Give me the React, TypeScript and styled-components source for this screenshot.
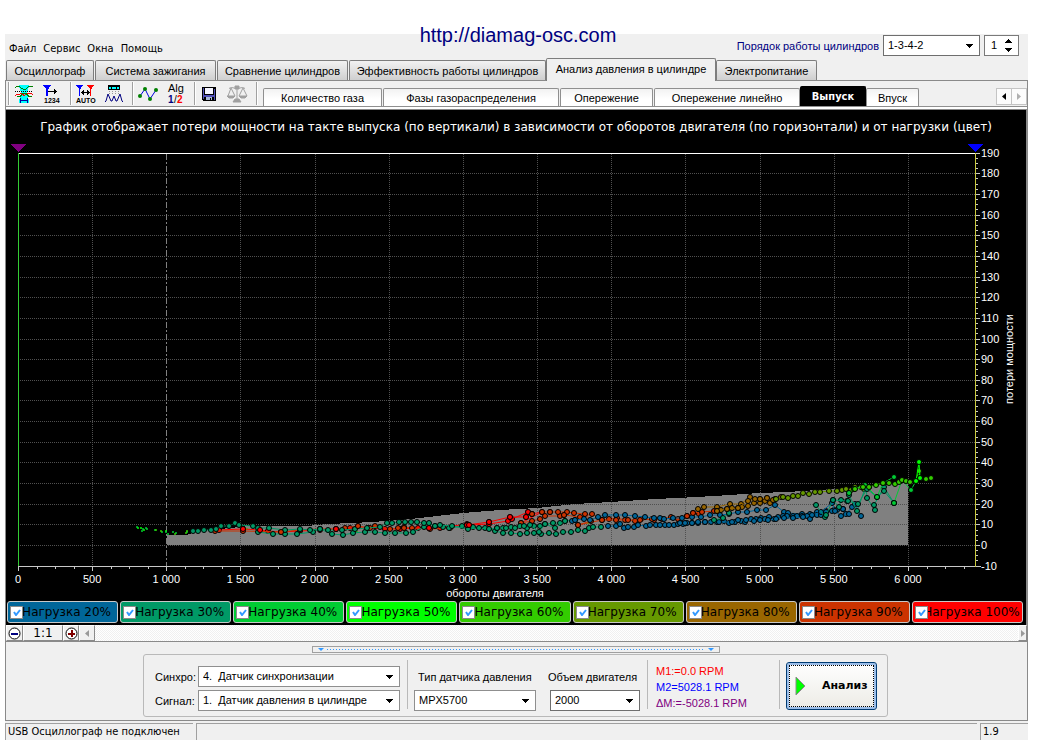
import React from "react";
import styled, { createGlobalStyle, css } from "styled-components";

const GlobalStyle = createGlobalStyle`
  * { box-sizing: border-box; }
  body {
    margin: 0;
    background: #fff;
    color: #000;
    font: 11px/14px "Liberation Sans", Arial, sans-serif;
  }
  button, input, select { font: inherit; color: inherit; margin: 0; }
`;

const tahoma = `"DejaVu Sans Condensed", Tahoma, sans-serif`;
const verdana = `"DejaVu Sans", Verdana, sans-serif`;

/* ---------- window ---------- */

const Page = styled.div`
  position: relative;
  padding: 34px 12px 0 5px;
`;

const SiteLink = styled.a`
  position: absolute;
  top: 23px;
  left: 0;
  right: 4px;
  text-align: center;
  font-size: 20px;
  line-height: 24px;
  color: #000080;
  text-decoration: none;
  pointer-events: none;
`;

const Window = styled.main`
  background: #f0f0f0;
`;

const MenuRow = styled.header`
  display: flex;
  justify-content: space-between;
  height: 24px;
`;

const Menu = styled.nav`
  display: flex;
  gap: 7px;
  padding: 5px 0 0 4px;
`;

const MenuItem = styled.button`
  border: 0;
  padding: 0;
  background: none;
  font-family: ${tahoma};
  line-height: 14px;
`;

const OrderBar = styled.div`
  display: flex;
  align-items: center;
  gap: 4px;
  height: 22px;
  padding-right: 9px;
`;

const OrderLabel = styled.label`
  color: #000080;
  padding-top: 2px;
`;

/* ---------- form parts ---------- */

const SelectBox = styled.span<{ $width: number; $dark?: boolean }>`
  position: relative;
  display: inline-flex;
  width: ${(p) => p.$width}px;
  height: 21px;

  select {
    appearance: none;
    width: 100%;
    border: 1px solid ${(p) => (p.$dark ? "#6e6e6e" : "#8f8f8f")};
    border-radius: 0;
    background: #fff;
    padding: 0 20px 0 4px;
    line-height: 17px;
    outline: none;
  }

  svg {
    position: absolute;
    right: 7px;
    top: 9px;
    pointer-events: none;
  }
`;

const SpinBox = styled.span`
  position: relative;
  display: inline-flex;
  width: 35px;
  height: 21px;

  input {
    appearance: textfield;
    width: 100%;
    border: 1px solid #7a7a7a;
    border-radius: 0;
    background: #fff;
    padding: 0 16px 0 6px;
    outline: none;
  }
  input::-webkit-inner-spin-button { display: none; }

  svg {
    position: absolute;
    right: 7px;
    top: 4px;
    pointer-events: none;
  }
`;

function Select({ id, width, options, dark, label }: {
  id: string; width: number; options: string[]; dark?: boolean; label?: string;
}) {
  return (
    <SelectBox $width={width} $dark={dark}>
      <select id={id} aria-label={label}>
        {options.map((o) => <option key={o}>{o}</option>)}
      </select>
      <svg width="7" height="4" viewBox="0 0 7 4" shapeRendering="crispEdges">
        <path d="M0 0h7v1H0zM1 1h5v1H1zM2 2h3v1H2zM3 3h1v1H3z" />
      </svg>
    </SelectBox>
  );
}

/* ---------- tab strips ---------- */

const MainTabs = styled.div`
  display: flex;
  align-items: flex-end;
  gap: 1px;
  height: 22px;
  padding-left: 1px;
`;

const MainTab = styled.button<{ $width: number; $active?: boolean }>`
  flex: 0 1 ${(p) => p.$width}px;
  height: 20px;
  padding: 0;
  border: 1px solid #7d7d7d;
  border-bottom: 0;
  border-radius: 2px 2px 0 0;
  background: linear-gradient(#f2f2f2, #cfcfcf);
  font-size: 11px;
  white-space: nowrap;
  ${(p) => p.$active && css`
    height: 23px;
    margin: 0 -1px -1px;
    background: #f0f0f0;
    position: relative;
    padding-bottom: 2px;
  `}
`;

const Toolbar = styled.div`
  display: flex;
  align-items: flex-end;
  height: 29px;
  border: 1px solid #8a8a8a;
  border-width: 1px 1px 0;
  background: linear-gradient(#f0f0f0 25px, #8f8f8f 25px, #8f8f8f 26px, #fff 26px);
`;

const Tools = styled.div`
  display: flex;
  align-items: center;
  align-self: flex-start;
  gap: 4px;
  height: 25px;
  width: 257px;
  flex: none;
  padding-left: 2px;
`;

const ToolGroup = styled.div`
  display: flex;
  align-items: center;
`;

const ToolSeparator = styled.span`
  width: 2px;
  height: 23px;
  border-left: 1px solid #a0a0a0;
  border-right: 1px solid #fff;
`;

const ToolButton = styled.button`
  display: grid;
  place-items: center;
  width: 28px;
  height: 24px;
  padding: 0;
  border: 0;
  background: none;
`;

const InnerTabs = styled.div`
  display: flex;
  flex: 1;
  gap: 1px;
  align-items: flex-end;
  align-self: flex-start;
  height: 25px;
`;

const InnerTab = styled.button<{ $width: number; $active?: boolean }>`
  flex: 0 1 ${(p) => p.$width}px;
  height: 18px;
  padding: 1px 0 0;
  border: 1px solid #8f8f8f;
  border-bottom: 0;
  border-radius: 2px 2px 0 0;
  background: linear-gradient(#f2f2f2, #fff 60%);
  white-space: nowrap;
  ${(p) => p.$active && css`
    height: 20px;
    margin: 0 -1px;
    background: #000;
    border-color: #000;
    color: #fff;
    font-family: ${tahoma};
    font-weight: bold;
  `}
`;

const TabScroller = styled.div`
  display: flex;
  align-self: flex-start;
  margin-top: 7px;
`;

const TabArrow = styled.button`
  display: grid;
  place-items: center;
  width: 16px;
  height: 17px;
  padding: 0;
  margin-left: -1px;
  border: 1px solid #c4c4c4;
  background: #fcfcfc;
`;

/* ---------- chart ---------- */

const ChartPanel = styled.section`
  border: 1px solid #8a8a8a;
  border-width: 1px 2px 0 1px;
  background: #000;
`;

const ChartTitle = styled.h1`
  margin: 0;
  height: 33px;
  padding-top: 8px;
  text-align: center;
  color: #fff;
  font: 12px/18px ${verdana};
  white-space: nowrap;
`;

const Plot = styled.svg`
  display: block;
  width: 100%;
  height: auto;
  font: 11px "Liberation Sans", Arial, sans-serif;
`;

const Legend = styled.div`
  display: grid;
  grid-template-columns: repeat(9, 1fr);
  gap: 2px;
  padding: 1px 3px 2px 1px;
`;

const LegendItem = styled.label<{ $color: string }>`
  position: relative;
  display: flex;
  align-items: center;
  justify-content: center;
  height: 22px;
  padding-left: 8px;
  border: 1px solid #c8c8c8;
  border-radius: 3px;
  background: ${(p) => p.$color};
  font: 12px/18px ${verdana};
  white-space: nowrap;
`;

const LegendCheck = styled.span`
  position: absolute;
  left: 2px;
  top: 4px;
  width: 13px;
  height: 13px;

  input {
    appearance: none;
    display: block;
    width: 13px;
    height: 13px;
    border: 1px solid #8a8a8a;
    background: #fff;
  }
  svg {
    position: absolute;
    top: 3px;
    left: 3px;
    pointer-events: none;
  }
  input:not(:checked) + svg { display: none; }
`;

const ScrollRow = styled.div`
  display: flex;
  height: 17px;
  border-left: 1px solid #8a8a8a;
  border-right: 1px solid #8a8a8a;
  border-bottom: 1px solid #8a8a8a;
  background: #f0f0f0;
`;

const ScrollButton = styled.button<{ $width: number }>`
  display: grid;
  place-items: center;
  flex: none;
  width: ${(p) => p.$width}px;
  height: 16px;
  padding: 0;
  border: 1px solid;
  border-color: #fff #8a8a8a #8a8a8a #fff;
  background: #f0f0f0;
  font: 12px/15px ${verdana};
`;

const ScrollTrack = styled.div`
  flex: 1;
  background: repeating-conic-gradient(#fff 0 25%, #f0f0f0 0 50%) 0 0 / 2px 2px;
`;

/* ---------- bottom panel ---------- */

const BottomArea = styled.section`
  display: flex;
  flex-direction: column;
  align-items: center;
  gap: 1px;
  padding: 4px 2px 3px 0;
  border: 1px solid #8a8a8a;
  border-top: 0;
`;

const Splitter = styled.button`
  display: flex;
  align-items: center;
  gap: 3px;
  width: 408px;
  height: 7px;
  padding: 0 5px;
  border: 1px solid #a0a0a0;
  background: #f0f0f0;
`;

const SplitterDots = styled.span`
  flex: 1;
  height: 1px;
  background: repeating-linear-gradient(90deg, #3399ff 0 1px, transparent 1px 3px);
`;

const ControlGroup = styled.div`
  display: flex;
  width: 745px;
  height: 63px;
  border: 1px solid #b9b9b9;
  border-radius: 3px;
  padding: 5px 8px 4px 11px;
`;

const SignalGrid = styled.div`
  display: grid;
  grid-template-columns: 40px 202px;
  grid-auto-rows: 21px;
  row-gap: 3px;
  column-gap: 3px;
  align-items: center;
  padding-top: 6px;
`;

const Divider = styled.span`
  width: 1px;
  height: 49px;
  margin: 0 6px 0 7px;
  background: #b9b9b9;
`;

const Field = styled.div`
  display: flex;
  flex-direction: column;
  gap: 6px;
  padding-top: 10px;
  margin-right: 14px;
  label { padding-left: 4px; white-space: nowrap; }
`;

const VolumeField = styled(Field)`
  margin-right: 0;
  label { padding-left: 0; margin-left: -2px; }
`;

const Markers = styled.div`
  width: 118px;
  padding: 3px 0 0 2px;
  line-height: 16px;
  white-space: nowrap;
`;

const Marker = styled.div<{ $color: string }>`
  color: ${(p) => p.$color};
`;

const AnalyzeButton = styled.button`
  display: flex;
  align-items: center;
  gap: 15px;
  width: 91px;
  height: 48px;
  margin-top: 2px;
  padding: 0 8px;
  border: 1px solid #003c74;
  border-radius: 3px;
  background: linear-gradient(#fff, #ecebe5);
  box-shadow: inset 0 0 0 2px #9dbfea;
  outline: 1px dotted #000;
  outline-offset: -4px;
  font: bold 11px/14px ${verdana};
`;

const StatusBar = styled.footer`
  display: flex;
  gap: 3px;
  padding-top: 2px;
`;

const StatusCell = styled.div<{ $width?: number }>`
  flex: ${(p) => (p.$width ? `0 0 ${p.$width}px` : "1")};
  height: 17px;
  padding: 0 2px;
  border: 1px solid #a0a0a0;
  border-width: 1px 0 0 1px;
  font-family: ${tahoma};
  line-height: 15px;
`;

/* ---------- toolbar icons ---------- */

const IconWindow = () => (
  <svg width="20" height="20" viewBox="0 0 20 20" fill="none" shapeRendering="crispEdges">
    <path fill="#00ffff" d="M5 1h10v3h-1v3h-1v4h1v4h1v4H5v-4h1v-4h1V7H6V4H5z" />
    <path stroke="#008000" d="M1 4l2-2h2l2 2 2 1h3l2-2 2-1h2l1 1" />
    <path stroke="#000" strokeDasharray="1 1" d="M1 7.500h18" />
    <path stroke="#ff0000" d="M1 12l2-2h3l2-1 2 3 2-2 2-1h3l2 2" />
    <path stroke="#008000" d="M3 12l3 1 3-4h3l3 4 3-1" />
    <path stroke="#0000a0" d="M6 16.500h8M6.500 14v5M13.500 14v5" />
  </svg>
);

const IconCount = () => (
  <svg width="20" height="20" viewBox="0 0 20 20" shapeRendering="crispEdges">
    <path fill="#0000ff" d="M1 1h8L7 4 6 5v7H4V5L3 4z" />
    <path fill="#000" d="M6 7h9v1H6zM12 5h1v1h1v1h1v1h-1v1h-1v1h-1z" />
    <text x="2" y="19" fontSize="7" fontWeight="bold" fontFamily="Liberation Sans, sans-serif">1234</text>
  </svg>
);

const IconAuto = () => (
  <svg width="22" height="20" viewBox="0 0 22 20" shapeRendering="crispEdges">
    <path fill="#0000ff" d="M1 1h7L6 4 5 5v7H4V5L3 4z" />
    <path fill="#ff0000" d="M12 1h7l-2 3-1 1v7h-1V5l-1-1z" />
    <path fill="#000" d="M6 8h9v1H6zM8 6h1v5H8zM7 7h1v3H7zM12 6h1v5h-1zM13 7h1v3h-1z" />
    <text x="1" y="19" fontSize="7" fontWeight="bold" fontFamily="Liberation Sans, sans-serif">AUTO</text>
  </svg>
);

const IconSpread = () => (
  <svg width="20" height="20" viewBox="0 0 20 20" fill="none">
    <g shapeRendering="crispEdges">
      <path fill="#000" d="M4 1h12v5H4z" />
      <path fill="#00ffff" d="M5 3h2v2H5zM8 3h4v2H8zM13 3h2v2h-2z" />
      <path stroke="#999" strokeDasharray="1 1" d="M5.500 7v3M8.500 7v3M11.500 7v3M14.500 7v3" />
    </g>
    <path stroke="#000080" d="M1 18l1-1 2-7 3 7h1l2-5 2 5h1l3-7 2 7 1 1" />
  </svg>
);

const IconGraph = () => (
  <svg width="22" height="18" viewBox="0 0 22 18">
    <path d="M3 11 8 4l5 10 6-9" fill="none" stroke="#0000e0" />
    <g fill="#008000">
      <circle cx="3" cy="11" r="2" /><circle cx="8" cy="4" r="2" />
      <circle cx="13" cy="14" r="2" /><circle cx="19" cy="5" r="2" />
    </g>
  </svg>
);

const IconAlg = () => (
  <svg width="20" height="22" viewBox="0 0 20 22" fontFamily="Liberation Sans, sans-serif" fontSize="11">
    <text x="2" y="9">Alg</text>
    <text x="2" y="20" fontSize="10" fontWeight="bold" fill="#000080">1</text>
    <text x="8" y="20" fontSize="10">/</text>
    <text x="11" y="20" fontSize="10" fontWeight="bold" fill="#ff0000">2</text>
  </svg>
);

const IconSave = () => (
  <svg width="16" height="16" viewBox="0 0 16 16" shapeRendering="crispEdges">
    <path d="M0 1h14v14H1l-1-1z" />
    <path fill="#5050b8" d="M1 2h1v11H1zM12 3h1v11h-1zM2 9h10v2H2z" />
    <path fill="#f4f4ff" d="M3 2h8v6H3z" />
    <path fill="#a8b8d8" d="M4 11h6v3H4z" />
    <path d="M8 12h1v2H8z" />
  </svg>
);

const IconScales = () => (
  <svg width="22" height="20" viewBox="0 0 22 20" fill="none" stroke="#a0a0a0">
    <path d="M10 2v14M2 4.500c3-2 5 0 8 0s5-2 8 0M4 4 1 12M4 4l4 8M16 4l-4 8M16 4l4 8" />
    <path fill="#a0a0a0" d="M0 12h8l-2 2H2zM12 12h8l-2 2h-4zM8 2h4v3H8zM8 15h4l2 3H6z" />
  </svg>
);

/* ---------- chart data ---------- */

const COLORS: Record<string, string> = {
  "20": "#006699", "30": "#009966", "40": "#00cc33", "50": "#00ff00", "60": "#33cc00",
  "70": "#669900", "80": "#996600", "90": "#cc3300", "100": "#ff0000",
};

type Series = { load: string; line?: boolean; small?: boolean; points: string };

const SERIES: Series[] = [
  { load: "50", small: true, points: "138,528 141,528 144,530 166,531 240,527 245,530" },
  { load: "40", small: true, points: "137,527 143,529 147,529 146,528 155,530 162,532 166,532 173,532 176,533 187,532 192,531 142,531 168,534" },
  { load: "60", small: true, points: "156,530 161,531 175,534 186,533 187,531 247,529 588,523 357,532" },
  { load: "100", line: true, points: "219,530 243,529 260,530 268,531 281,532 300,531 320,530 336,529 350,528 368,528 385,529 400,529 418,528 429,528 440,528 467,524 469,525 489,524 508,521 512,519 528,512 532,514" },
  { load: "100", line: true, points: "467,525 489,522 510,517 526,517 532,514 542,512 521,523" },
  { load: "90", line: true, points: "215,531 243,531 281,532 300,530 320,529 336,529 345,528 358,526 370,528 375,526 390,529 398,528 404,527 412,528 430,529 450,528" },
  { load: "90", line: true, points: "521,523 532,521 540,519 545,516 560,516 564,515 580,517 592,514 602,520 609,519 617,518 625,520 635,521 641,519 654,520 662,519 671,517 678,519 687,516 693,513 699,514" },
  { load: "90", line: true, points: "542,512 550,512 558,512 567,512 574,513 585,514 591,521 578,525 602,520 616,520 628,520 640,520 652,519" },
  { load: "30", line: true, points: "193,531 198,531 204,530 211,530 216,529 221,526 229,526 235,523 239,525 253,526 258,532 273,534 285,534 297,534 313,532 320,529 332,534 343,535 353,533 365,532 375,532 385,533 395,533 406,533 413,532 424,527 435,526 443,527 449,528 462,526 473,527 485,528 495,531 503,533 511,533 520,534 527,533 534,533 541,534 549,533 556,534 563,532 571,532 578,530 585,531 589,528 593,527 601,527" },
  { load: "30", line: true, points: "258,528 269,528 285,530 300,529 310,530 320,529 328,530 342,530 355,529 367,528 380,527 387,523 392,523 399,522 405,522 411,522 417,522 424,523 429,523 435,526 440,525 452,526 468,529 479,528 489,529 497,528 503,528 511,527 520,526 527,528 534,526 540,526 545,524 553,523 560,523 565,521 575,520" },
  { load: "30", line: true, points: "497,528 506,528 515,528 524,526 530,525 539,532 545,524 555,528 565,521" },
  { load: "20", line: true, points: "572,521 575,520 584,519 590,520 598,517 605,515 616,515 625,515 635,516 645,517 654,518 660,518 664,519 673,518 682,518 692,517 701,517 710,515 720,515 729,514 738,512 747,512 757,510 766,510 775,505 784,512 788,513 802,514 810,514 817,512 826,511 834,510 843,509" },
  { load: "20", line: true, points: "608,526 616,526 620,524 624,528 628,527 634,527 638,525 646,526 650,525 656,525 660,525 665,525 669,525 674,525 678,524 683,524 687,523 692,523 698,523 705,522 711,522 717,522 724,521 729,523 735,522 741,521 745,522 751,519 756,519 761,518 765,519 769,517 774,519 778,517 783,516 787,516 793,516 797,516 802,516 807,516 810,519 817,515 821,515 826,512 832,511 837,510 843,509 846,514 852,507 855,504 861,516" },
  { load: "20", line: true, points: "680,523 685,523 692,523 698,522 705,522 719,522 732,522 738,520 746,520 754,521 760,520 768,520 776,519 784,518 793,518 803,517 812,515 821,512 832,503 835,511 841,516 849,514" },
  { load: "30", line: true, points: "714,520 723,518 729,513" },
  { load: "90", line: true, points: "687,516 693,513 702,512 714,511 719,509" },
  { load: "80", line: true, points: "698,509 704,507 717,507 730,504 741,504 750,497 760,499 767,498 775,499" },
  { load: "80", line: true, points: "717,511 721,510 727,509 732,508 738,508 742,507 748,506 754,503 760,503 765,501 770,503 773,500 781,497" },
  { load: "80", line: true, points: "717,511 727,509 738,508 748,501 755,499 760,499 767,498" },
  { load: "70", line: true, points: "776,499 783,497 788,498 793,496 798,496 803,493 809,494 815,492 820,492 829,491 837,491 842,490 846,489 851,490 855,487 861,487 864,489 869,487" },
  { load: "30", line: true, points: "816,505 825,517 826,515 833,500 839,507 841,500 847,501 849,495 857,511 866,486 867,498 875,510 874,505 884,487 894,503" },
  { load: "30", line: true, points: "833,500 848,501 858,504 867,489 877,497 884,491 894,503" },
  { load: "40", line: true, points: "849,493 854,489 865,485 877,497 883,483 894,477" },
  { load: "40", line: true, points: "894,503 902,480 911,490 916,481" },
  { load: "60", line: true, points: "855,489 863,487 869,487 876,485 883,483 889,483 895,484 899,482 902,480 906,481 910,482 916,481 919,471 920,478" },
  { load: "60", line: false, points: "926,479 931,478" },
  { load: "50", line: true, points: "916,481 919,462 920,478" },
];

const ACCENTS = "243,529,100 260,530,100 281,532,90 336,529,100 358,526,90 429,528,100 404,528,90 467,525,100 469,525,100 489,522,100 528,512,100 510,517,100 526,517,100 532,514,90 550,512,90 564,515,90 578,525,90"
  .split(" ").map((a) => a.split(","));

const BAND =
  "167,535 187,535 198,531 220,529 250,526 307,526 327,524 353,523 387,521 420,518 463,513 500,510 537,508 575,504 611,502 655,499 697,497 730,495 759,493 787,492 834,489 870,486 908,483 908,545 167,545";

const X0 = 18;
const xAt = (rpm: number) => Math.round(X0 + rpm * 0.14833) + 0.5;
const yAt = (loss: number) => Math.round(545 - loss * 2.065) + 0.5;
const range = (from: number, to: number, step: number) =>
  Array.from({ length: Math.floor((to - from) / step) + 1 }, (_, i) => from + i * step);
const spaced = (n: number) => String(n).replace(/\B(?=(\d{3})+$)/g, " ");

function PowerLossPlot() {
  return (
    <Plot viewBox="6 143 1020 457" role="img" aria-label="График потерь мощности">
      <g shapeRendering="crispEdges">
        <polygon points={BAND} fill="#808080" />
        <g stroke="#505050" strokeDasharray="1 1">
          {range(0, 180, 10).map((v) => <line key={v} x1={X0} x2="976" y1={yAt(v)} y2={yAt(v)} />)}
          {range(500, 6000, 500).filter((r) => r !== 1000).map((r) => (
            <line key={r} x1={xAt(r)} x2={xAt(r)} y1="154" y2="566" />
          ))}
        </g>
        <line x1={xAt(1000)} x2={xAt(1000)} y1="154" y2="566" stroke="#808080" strokeDasharray="6 2 2 2" />
        <line x1="18" x2="976" y1="153.5" y2="153.5" stroke="#fff" />
        <line x1="18" x2="981" y1="566.5" y2="566.5" stroke="#c8c8c8" />
        <line x1="18.5" x2="18.5" y1="153" y2="566" stroke="#33cc33" />
        <line x1="975.5" x2="975.5" y1="153" y2="567" stroke="#c8c83c" />
        <g stroke="#c8c8c8">
          {range(0, 6375, 125).map((r) => (
            <line key={r} x1={xAt(r)} x2={xAt(r)} y1="567" y2={r % 500 ? 569 : 571} />
          ))}
          {range(-10, 190, 2.5).map((v) => (
            <line key={v} x1="976" x2={v % 10 ? 978 : 980} y1={yAt(v)} y2={yAt(v)} />
          ))}
        </g>
        <path d="M10 144h16l-8 8z" fill="#800080" />
        <path d="M967 144h16l-8 8z" fill="#0000ff" />
      </g>

      {SERIES.map((s, i) => {
        const pts = s.points.split(" ").map((p) => p.split(","));
        return (
          <g key={i} fill={COLORS[s.load]}>
            {s.line && <polyline points={s.points} fill="none" stroke={COLORS[s.load]} />}
            {pts.map(([x, y], j) => (
              <circle key={j} cx={x} cy={y} r={s.small ? 1 : 2.5}
                stroke={s.small ? "none" : "#000"} />
            ))}
          </g>
        );
      })}
      {ACCENTS.map(([x, y, load], i) => (
        <circle key={i} cx={x} cy={y} r="2.5" fill={COLORS[load]} stroke="#000" />
      ))}

      <g fill="#fff">
        {range(0, 6000, 500).map((r) => (
          <text key={r} x={X0 + r * 0.14833} y="583" textAnchor="middle">{spaced(r)}</text>
        ))}
        {range(-10, 190, 10).map((v) => (
          <text key={v} x="981" y={yAt(v) + 3.5}>{v}</text>
        ))}
        <text x="495" y="597" textAnchor="middle">обороты двигателя</text>
        <text transform="translate(1013 359) rotate(-90)" textAnchor="middle">потери мощности</text>
      </g>
    </Plot>
  );
}

/* ---------- page ---------- */

const MAIN_TABS: [string, number][] = [
  ["Осциллограф", 88], ["Система зажигания", 121], ["Сравнение цилиндров", 131],
  ["Эффективность работы цилиндров", 197], ["Анализ давления в цилиндре", 170], ["Электропитание", 101],
];

const INNER_TABS: [string, number][] = [
  ["Количество газа", 119], ["Фазы газораспределения", 176], ["Опережение", 93],
  ["Опережение линейно", 146], ["Выпуск", 66], ["Впуск", 53],
];

const DownMark = () => (
  <svg width="6" height="3" viewBox="0 0 6 3"><path d="M0 0h6L3 3z" fill="#3399ff" /></svg>
);

export default function App() {
  return (
    <>
      <GlobalStyle />
      <Page>
        <SiteLink href="http://diamag-osc.com">http://diamag-osc.com</SiteLink>
        <Window>
          <MenuRow>
            <Menu>
              {["Файл", "Сервис", "Окна", "Помощь"].map((m) => <MenuItem key={m}>{m}</MenuItem>)}
            </Menu>
            <OrderBar>
              <OrderLabel htmlFor="order">Порядок работы цилиндров</OrderLabel>
              <Select id="order" width={97} dark options={["1-3-4-2"]} />
              <SpinBox>
                <input type="number" aria-label="Номер цилиндра" defaultValue={1} />
                <svg width="7" height="13" viewBox="0 0 7 13" shapeRendering="crispEdges">
                  <path d="M3 0h1v1H3zM2 1h3v1H2zM1 2h5v1H1zM0 3h7v1H0zM0 9h7v1H0zM1 10h5v1H1zM2 11h3v1H2zM3 12h1v1H3z" />
                </svg>
              </SpinBox>
            </OrderBar>
          </MenuRow>

          <MainTabs role="tablist">
            {MAIN_TABS.map(([name, width], i) => (
              <MainTab key={name} role="tab" $width={width} $active={i === 4}>{name}</MainTab>
            ))}
          </MainTabs>

          <Toolbar>
            <Tools>
              <ToolGroup>
                <ToolSeparator />
                <ToolButton aria-label="Окно"><IconWindow /></ToolButton>
                <ToolButton aria-label="Отсчёт"><IconCount /></ToolButton>
              </ToolGroup>
              <ToolGroup>
                <ToolSeparator />
                <ToolButton aria-label="Авто"><IconAuto /></ToolButton>
                <ToolButton aria-label="Развёртка"><IconSpread /></ToolButton>
              </ToolGroup>
              <ToolGroup>
                <ToolSeparator />
                <ToolButton aria-label="График"><IconGraph /></ToolButton>
                <ToolButton aria-label="Алгоритм"><IconAlg /></ToolButton>
              </ToolGroup>
              <ToolGroup>
                <ToolSeparator />
                <ToolButton aria-label="Сохранить"><IconSave /></ToolButton>
                <ToolButton aria-label="Баланс"><IconScales /></ToolButton>
              </ToolGroup>
              <ToolSeparator />
            </Tools>
            <InnerTabs role="tablist">
              {INNER_TABS.map(([name, width], i) => (
                <InnerTab key={name} role="tab" $width={width} $active={i === 4}>{name}</InnerTab>
              ))}
            </InnerTabs>
            <TabScroller>
              <TabArrow aria-label="Назад">
                <svg width="4" height="7" viewBox="0 0 4 7"><path d="M4 0v7L0 3.500z" /></svg>
              </TabArrow>
              <TabArrow aria-label="Вперёд">
                <svg width="4" height="7" viewBox="0 0 4 7"><path d="M0 0v7l4-3.500z" fill="#b0b0b0" /></svg>
              </TabArrow>
            </TabScroller>
          </Toolbar>

          <ChartPanel>
            <ChartTitle>
              График отображает потери мощности на такте выпуска (по вертикали) в зависимости от оборотов двигателя (по горизонтали) и от нагрузки (цвет)
            </ChartTitle>
            <PowerLossPlot />
            <Legend>
              {Object.keys(COLORS).map((load) => (
                <LegendItem key={load} $color={COLORS[load]}>
                  <LegendCheck>
                    <input type="checkbox" defaultChecked />
                    <svg width="8" height="7" viewBox="0 0 8 7">
                      <path d="M1 3l2 3 4-5" fill="none" stroke="#3399ff" strokeWidth="2" />
                    </svg>
                  </LegendCheck>
                  <span>Нагрузка {load}%</span>
                </LegendItem>
              ))}
            </Legend>
          </ChartPanel>

          <ScrollRow>
            <ScrollButton $width={17} aria-label="Уменьшить">
              <svg width="13" height="13" viewBox="0 0 13 13">
                <circle cx="6.500" cy="6.500" r="5.500" fill="#fff" stroke="#000" />
                <path d="M3 6h7v2H3z" fill="#000080" />
              </svg>
            </ScrollButton>
            <ScrollButton $width={40}>1:1</ScrollButton>
            <ScrollButton $width={16} aria-label="Увеличить">
              <svg width="13" height="13" viewBox="0 0 13 13">
                <circle cx="6.500" cy="6.500" r="5.500" fill="#fff" stroke="#000" />
                <path d="M3 6h7v2H3zM6 3h2v7H6z" fill="#800000" />
              </svg>
            </ScrollButton>
            <ScrollButton $width={16} aria-label="Влево">
              <svg width="4" height="7" viewBox="0 0 4 7"><path d="M4 0v7L0 3.500z" fill="#999" /></svg>
            </ScrollButton>
            <ScrollTrack />
            <ScrollButton $width={9} aria-label="Вправо">
              <svg width="4" height="7" viewBox="0 0 4 7"><path d="M0 0v7l4-3.500z" fill="#999" /></svg>
            </ScrollButton>
          </ScrollRow>

          <BottomArea>
            <Splitter aria-label="Свернуть панель">
              <DownMark /><SplitterDots /><DownMark />
            </Splitter>
            <ControlGroup>
              <SignalGrid>
                <label htmlFor="sync">Синхро:</label>
                <Select id="sync" width={202} options={["4.\u00a0\u00a0Датчик синхронизации"]} />
                <label htmlFor="signal">Сигнал:</label>
                <Select id="signal" width={202} options={["1.\u00a0\u00a0Датчик давления в цилиндре"]} />
              </SignalGrid>
              <Divider />
              <Field>
                <label htmlFor="sensor">Тип датчика давления</label>
                <Select id="sensor" width={122} options={["MPX5700"]} />
              </Field>
              <VolumeField>
                <label htmlFor="volume">Объем двигателя</label>
                <Select id="volume" width={90} dark options={["2000"]} />
              </VolumeField>
              <Divider />
              <Markers>
                <Marker $color="#ff0000">M1:=0.0 RPM</Marker>
                <Marker $color="#0000ff">M2=5028.1 RPM</Marker>
                <Marker $color="#800080">ΔM:=-5028.1 RPM</Marker>
              </Markers>
              <Divider />
              <AnalyzeButton>
                <svg width="12" height="20" viewBox="0 0 12 20">
                  <path d="M1 1l9 9-9 9z" fill="#00ff00" stroke="#8a8a8a" />
                </svg>
                Анализ
              </AnalyzeButton>
            </ControlGroup>
          </BottomArea>

          <StatusBar>
            <StatusCell $width={188}>USB Осциллограф не подключен</StatusCell>
            <StatusCell />
            <StatusCell $width={48}>1.9</StatusCell>
          </StatusBar>
        </Window>
      </Page>
    </>
  );
}
